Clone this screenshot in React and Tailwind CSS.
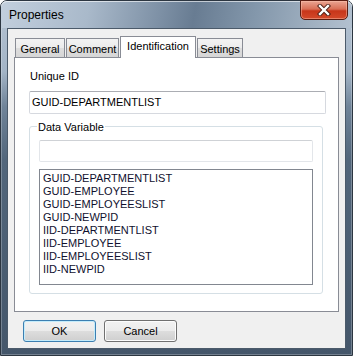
const tabs = [
  { label: "General", w: "w-[50px]" },
  { label: "Comment", w: "w-[53px]" },
  { label: "Identification", w: "w-[76px]", active: true },
  { label: "Settings", w: "w-[46px]" },
];

const variables = [
  "GUID-DEPARTMENTLIST",
  "GUID-EMPLOYEE",
  "GUID-EMPLOYEESLIST",
  "GUID-NEWPID",
  "IID-DEPARTMENTLIST",
  "IID-EMPLOYEE",
  "IID-EMPLOYEESLIST",
  "IID-NEWPID",
];

function CloseButton() {
  return (
    <div className="-mt-px mr-[4px] flex h-[20px] w-[48px] items-center justify-center rounded-b-[5px] border border-[#5b1d12] bg-[linear-gradient(180deg,#eaa593_0%,#d96f56_45%,#c7361a_55%,#d3492a_100%)] shadow-[inset_0_0_0_1px_rgba(255,200,180,0.45)]">
      <svg width="14" height="12" viewBox="0 0 14 12">
        <path d="M3 2 L11 10 M11 2 L3 10" stroke="#4a1d14" strokeWidth="4.2" strokeLinecap="square" />
        <path d="M3 2 L11 10 M11 2 L3 10" stroke="#ffffff" strokeWidth="2.4" strokeLinecap="square" />
      </svg>
    </div>
  );
}

function Tab({ label, w, active }) {
  if (active) {
    return (
      <div className={`${w} relative z-10 -mb-px h-[22px] border border-b-0 border-[#898c95] bg-white pt-[3px] text-center leading-[13px]`}>
        {label}
      </div>
    );
  }
  return (
    <div className={`${w} h-[19px] border border-b-0 border-[#898c95] bg-[linear-gradient(180deg,#f3f3f3_0%,#ebebeb_50%,#dddddd_51%,#d6d6d6_100%)] pt-[4px] text-center leading-[13px]`}>
      {label}
    </div>
  );
}

function Button({ children, isDefault }) {
  return (
    <div
      className={`flex h-[22px] w-[73px] items-center justify-center rounded-[3px] border bg-[linear-gradient(180deg,#f2f2f2_0%,#ebebeb_50%,#dddddd_51%,#cfcfcf_100%)] leading-[13px] ${
        isDefault
          ? "border-[#3c7fb1] shadow-[inset_0_0_0_1px_#c4ecfb]"
          : "border-[#707070] shadow-[inset_0_0_0_1px_#fcfcfc]"
      }`}
    >
      {children}
    </div>
  );
}

export default function App() {
  return (
    <div className="flex h-[356px] w-[353px] flex-col rounded-t-[7px] border border-[#2c3641] bg-[linear-gradient(180deg,#b6c4d3_0%,#a3b4c6_20%,#6f8398_30%,#52667b_45%,#44566a_100%)] font-['Liberation_Sans',Arial,sans-serif] text-[11px] text-black shadow-[inset_0_0_0_1px_rgba(255,255,255,0.25)]">
      {/* title bar */}
      <div className="flex h-[27px] items-start justify-between rounded-t-[6px] bg-[linear-gradient(100deg,#c2cfdd_0%,#a9b9ca_25%,#7e91a6_45%,#687c92_55%,#8397ab_72%,#a2b2c2_90%,#b3c1d0_100%)] shadow-[inset_0_1px_0_rgba(255,255,255,0.6)]">
        <div className="ml-[8px] mt-[6px] text-[12px] leading-[16px] text-black">Properties</div>
        <CloseButton />
      </div>

      {/* client */}
      <div className="mx-[6px] flex h-[321px] flex-col border border-[#4b5a6a] bg-[#f0f0f0] px-[6px] pt-[7px]">
        <div className="flex h-[21px] items-end gap-px pl-px">
          {tabs.map((t) => (
            <Tab key={t.label} {...t} />
          ))}
        </div>

        <div className="flex h-[255px] flex-col border border-[#898c95] bg-white pl-[14px] pt-[11px]">
          <div className="pl-px leading-[14px]">Unique ID</div>
          <div className="mt-[8px] flex h-[23px] w-[297px] items-center rounded-[2px] border border-[#d6d9df] border-t-[#abadb3] pb-px pl-[2px] leading-[13px]">
            GUID-DEPARTMENTLIST
          </div>

          <div className="relative mt-[12px] flex h-[168px] w-[294px] flex-col rounded-[3px] border border-[#d5dfe5] pl-[9px] pt-[13px]">
            <div className="absolute -top-[7px] left-[7px] bg-white px-px leading-[14px]">Data Variable</div>
            <div className="h-[22px] w-[274px] rounded-[2px] border border-[#e3e6ea] border-t-[#cfd2d6]" />
            <div className="mt-[7px] h-[116px] w-[274px] border border-[#828790] pl-[3px] pt-[2px] text-[#10102e]">
              {variables.map((v) => (
                <div key={v} className="leading-[13px]">
                  {v}
                </div>
              ))}
            </div>
          </div>
        </div>

        <div className="mt-[8px] flex gap-[8px] pl-[9px]">
          <Button isDefault>OK</Button>
          <Button>Cancel</Button>
        </div>
      </div>
    </div>
  );
}
